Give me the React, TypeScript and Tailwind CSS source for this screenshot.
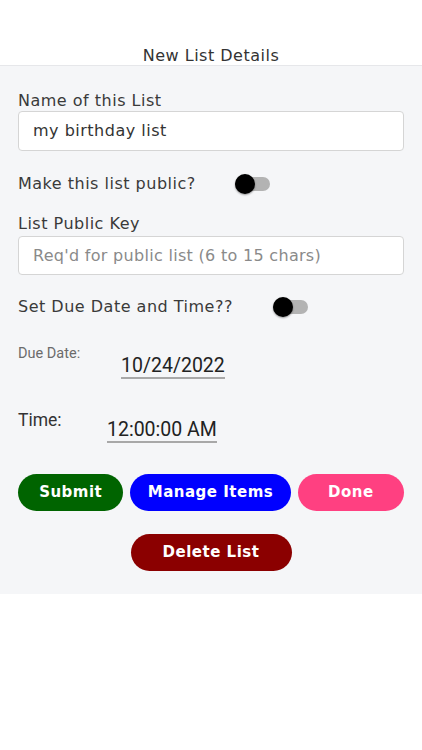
import React from "react";

const sans = "font-['DejaVu_Sans',sans-serif]";
const roboto = "font-['Roboto',sans-serif]";

function Toggle() {
  return (
    <div className="relative w-[35px] h-[20px] flex items-center">
      <div className="w-full h-[14px] rounded-full bg-[#b3b3b3]" />
      <div className="absolute left-0 top-0 w-[20px] h-[20px] rounded-full bg-black shadow-[0_1px_2px_rgba(0,0,0,0.4)]" />
    </div>
  );
}

export default function App() {
  return (
    <div className={`w-[422px] h-[750px] bg-white ${sans} text-[#3a3a3a] tracking-[0.5px]`}>
      <div className="h-[66px] flex items-end justify-center border-b border-[#e6e7ea]">
        <h1 className="text-[16px] leading-[18px] text-[#333]">New List Details</h1>
      </div>
      <div className="bg-[#f5f6f8] h-[528px] px-[18px] pt-[24px]">
        <label className="block text-[16px] leading-[21px]">Name of this List</label>
        <div className="h-[40px] bg-white border border-[#d5d5d5] rounded-[4px] flex items-center px-[14px] text-[16px] text-[#333]">
          my birthday list
        </div>

        <div className="mt-[22px] flex items-center h-[22px]">
          <span className="text-[16px] w-[217px]">Make this list public?</span>
          <Toggle />
        </div>

        <label className="block mt-[19px] text-[16px] leading-[20px]">List Public Key</label>
        <div className="mt-[2px] h-[39px] bg-white border border-[#d5d5d5] rounded-[4px] flex items-center px-[14px] text-[16px] text-[#8a8a8a] tracking-[0.3px]">
          Req'd for public list (6 to 15 chars)
        </div>

        <div className="mt-[21px] flex items-center h-[22px]">
          <span className="text-[16px] w-[255px]">Set Due Date and Time??</span>
          <Toggle />
        </div>

        <div className={`mt-[22px] flex ${roboto} tracking-normal`}>
          <span className="text-[14.5px] text-[#6b6b6b] w-[103px] pt-[3px]">Due Date:</span>
          <div className="mt-[15px]">
            <div className="text-[19.5px] leading-[21px] text-[#222]">10/24/2022</div>
            <div className="h-[2px] bg-[#a8a8a8] mt-[1px]" />
          </div>
        </div>

        <div className={`mt-[28px] flex ${roboto} tracking-normal`}>
          <span className="text-[17.5px] text-[#333] w-[89px]">Time:</span>
          <div className="mt-[12px]">
            <div className="text-[19.5px] leading-[21px] text-[#222]">12:00:00 AM</div>
            <div className="h-[2px] bg-[#a8a8a8] mt-[1px]" />
          </div>
        </div>

        <div className="mt-[31px] flex gap-[7px] text-white font-bold text-[15px]">
          <button className="w-[106px] h-[37px] rounded-full bg-[#006400]">Submit</button>
          <button className="w-[161px] h-[37px] rounded-full bg-[#0000ff]">Manage Items</button>
          <button className="w-[107px] h-[37px] rounded-full bg-[#ff4081]">Done</button>
        </div>
        <div className="mt-[23px] flex justify-center">
          <button className="w-[161px] h-[37px] rounded-full bg-[#8b0000] text-white font-bold text-[15px]">Delete List</button>
        </div>
      </div>
    </div>
  );
}
